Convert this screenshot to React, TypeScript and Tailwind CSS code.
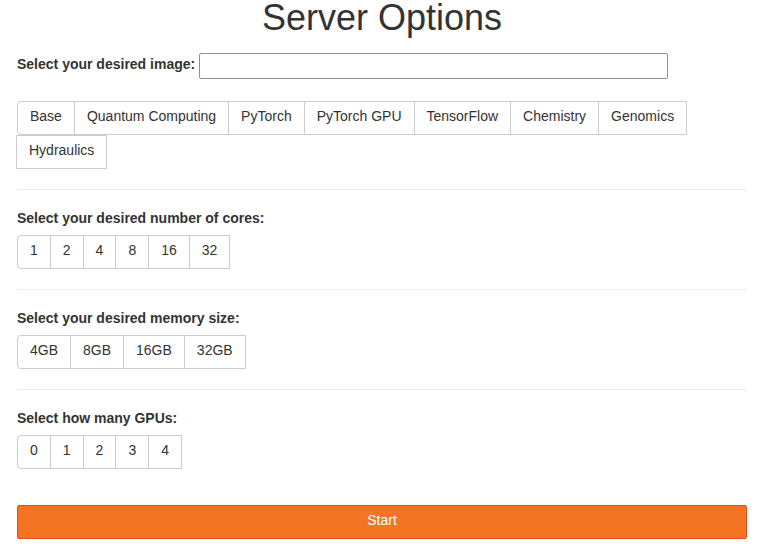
const images = ["Base", "Quantum Computing", "PyTorch", "PyTorch GPU", "TensorFlow", "Chemistry", "Genomics", "Hydraulics"]
const cores = ["1", "2", "4", "8", "16", "32"]
const memory = ["4GB", "8GB", "16GB", "32GB"]
const gpus = ["0", "1", "2", "3", "4"]

function ButtonGroup({ options, wrap }: { options: string[]; wrap?: boolean }) {
  return (
    <div className={wrap ? "flex flex-wrap" : "flex"}>
      {options.map((opt, index) => (
        <button
          key={opt}
          type="button"
          className={`h-[34px] border border-[#ccc] bg-white px-3 pb-1 text-[14px] leading-5 text-[#333] ${index > 0 ? "-ml-px" : ""} ${index === 0 ? "rounded-l-[4px]" : ""}`}
        >
          {opt}
        </button>
      ))}
    </div>
  )
}

function Section({ label, options }: { label: string; options: string[] }) {
  return (
    <div>
      <hr className="my-5 border-0 border-t border-[#eee]" />
      <div className="mb-[9px] text-[14px] font-bold leading-4 text-[#333]">{label}</div>
      <ButtonGroup options={options} />
    </div>
  )
}

export default function App() {
  return (
    <div className="min-h-[558px] w-[770px] bg-white pl-[17px] pr-[23px] text-[#333] [font-family:'Liberation_Sans',Arial,sans-serif]">
      <h1 className="m-0 text-center text-[36px] leading-[36px] font-medium">Server Options</h1>

      <div className="mt-[17px] flex h-[26px] items-center">
        <label className="pb-1 text-[14px] font-bold leading-5">Select your desired image:</label>
        <input type="text" className="ml-[4px] h-[26px] w-[469px] rounded-[2px] border border-[#8f8f9d] bg-white" />
      </div>

      <div className="mt-[22px] w-[680px]">
        <ButtonGroup options={images} wrap />
      </div>

      <Section label="Select your desired number of cores:" options={cores} />
      <Section label="Select your desired memory size:" options={memory} />
      <Section label="Select how many GPUs:" options={gpus} />

      <button
        type="button"
        className="mt-9 h-[34px] w-full rounded-[2px] border border-[#e34f21] bg-[#f37524] pb-1 text-[14px] text-white"
      >
        Start
      </button>
    </div>
  )
}
